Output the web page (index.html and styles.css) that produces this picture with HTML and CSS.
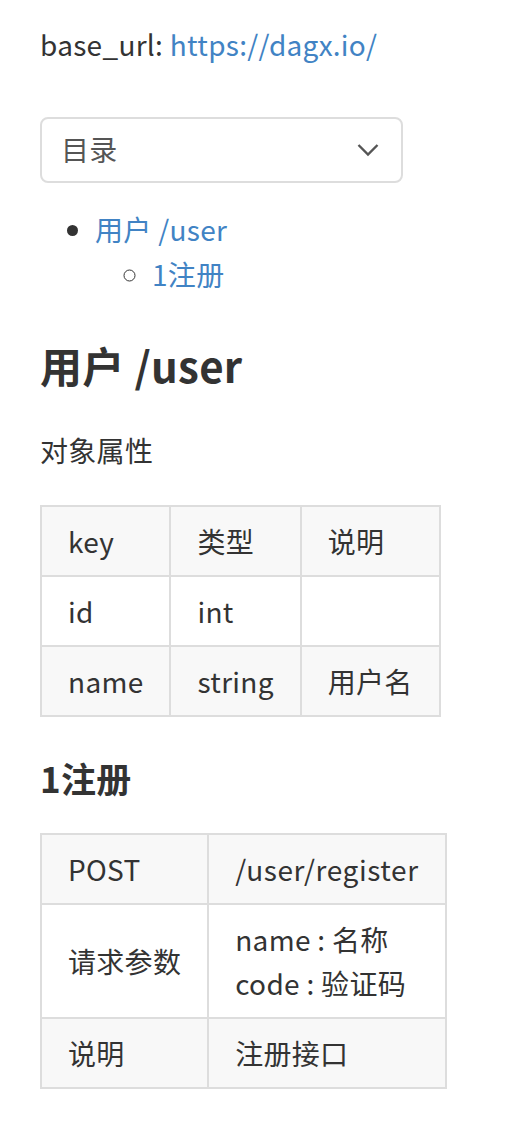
FILE: index.html
```html
<!DOCTYPE html>
<html lang="zh">
<head>
<meta charset="utf-8">
<link rel="stylesheet" href="styles.css">
</head>
<body>
<div class="page">
  <p class="base">base_url: <a href="#">https://dagx.io/</a></p>
  <div class="select">
    <span>目录</span>
    <svg class="chev" width="22" height="14" viewBox="0 0 22 14"><path d="M1.5 2 L11 11.5 L20.5 2" fill="none" stroke="#555" stroke-width="2.4"/></svg>
  </div>
  <ul class="toc">
    <li><a href="#">用户 /user</a>
      <ul>
        <li><a href="#">1注册</a></li>
      </ul>
    </li>
  </ul>
  <h2 class="h2">用户 /user</h2>
  <p class="para">对象属性</p>
  <table class="tbl">
    <tr class="gray"><td>key</td><td>类型</td><td>说明</td></tr>
    <tr><td>id</td><td>int</td><td></td></tr>
    <tr class="gray"><td>name</td><td>string</td><td>用户名</td></tr>
  </table>
  <h3 class="h3">1注册</h3>
  <table class="tbl">
    <tr class="gray"><td>POST</td><td class="wide">/user/register</td></tr>
    <tr><td>请求参数</td><td>name : 名称<br>code : 验证码</td></tr>
    <tr class="gray"><td>说明</td><td>注册接口</td></tr>
  </table>
</div>
</body>
</html>
```
FILE: styles.css
```css
html, body {
  margin: 0;
  padding: 0;
  background: #fff;
}
.page {
  padding: 22px 40px;
  font-family: "Noto Sans CJK SC", "Noto Sans", sans-serif;
  font-size: 28px;
  line-height: 44.8px;
  letter-spacing: 0.3px;
  color: #333;
}
a {
  color: #4183c4;
  text-decoration: none;
}
.base {
  margin: 0 0 50px 0;
}
.select {
  width: 363px;
  height: 66px;
  box-sizing: border-box;
  border: 2px solid #ddd;
  border-radius: 8px;
  display: flex;
  align-items: center;
  justify-content: space-between;
  padding: 0 22px 0 19px;
  color: #555;
}
.toc {
  margin: 24px 0 0 0;
  padding-left: 55px;
}
.toc ul {
  padding-left: 57px;
  margin: 0;
  list-style-type: circle;
}
.h2 {
  font-size: 42px;
  line-height: 1.2;
  margin: 44px 0 0 0;
}
.para {
  margin: 37px 0 0 0;
}
.tbl {
  border-collapse: collapse;
  margin-top: 32px;
}
.tbl td {
  border: 2px solid #ddd;
  padding: 12px 26px;
  line-height: 44px;
  vertical-align: middle;
}
.tbl td.wide {
  letter-spacing: 0.6px;
}
.tbl tr.gray {
  background: #f8f8f8;
}
.h3 {
  font-size: 35px;
  line-height: 1.2;
  margin: 40px 0 0 0;
}
.h3 + .tbl {
  margin-top: 34px;
}
```
